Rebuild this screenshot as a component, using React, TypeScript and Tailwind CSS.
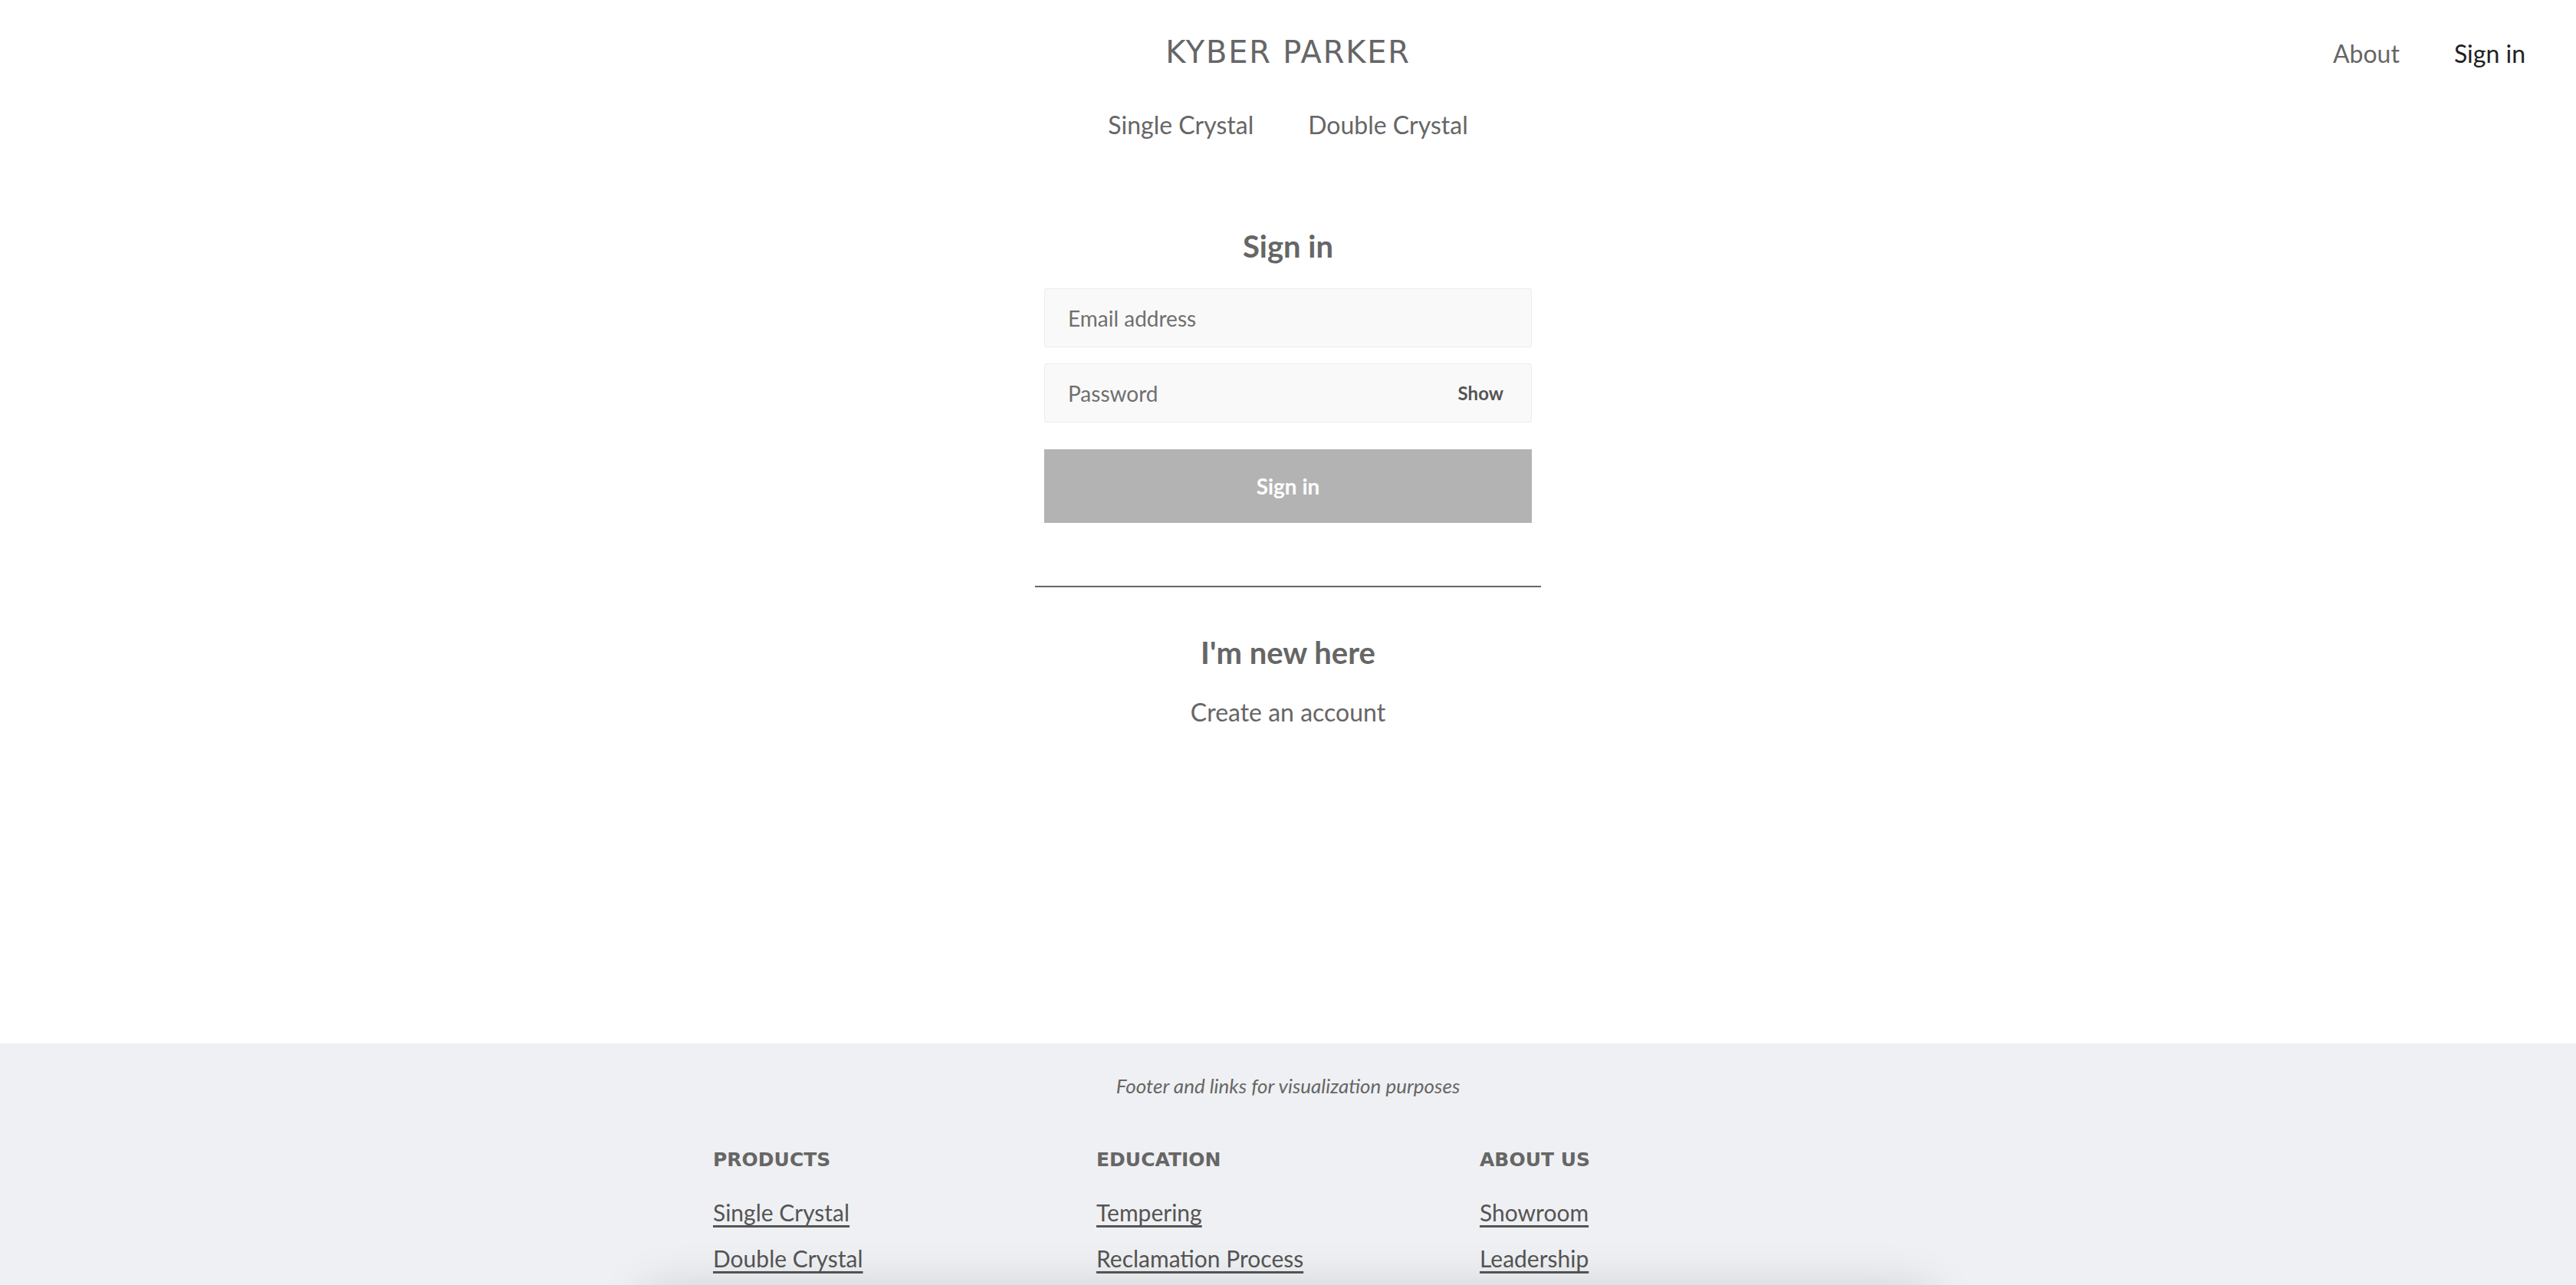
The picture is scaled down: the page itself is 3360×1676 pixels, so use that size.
import React from "react";

const footerColumns = [
  { title: "PRODUCTS", links: ["Single Crystal", "Double Crystal"] },
  { title: "EDUCATION", links: ["Tempering", "Reclamation Process"] },
  { title: "ABOUT US", links: ["Showroom", "Leadership"] },
];

export default function App() {
  return (
    <div className="relative min-h-screen bg-white font-[family-name:Lato,sans-serif] text-[#666]">
      <header className="grid grid-cols-[1fr_auto_1fr] items-baseline px-[66px] pt-[44px]">
        <div />
        <a
          href="#"
          className="font-[family-name:'DejaVu_Sans',sans-serif] text-[40px] leading-[48px] tracking-[1.75px] text-[#666]"
        >
          KYBER PARKER
        </a>
        <nav className="flex items-baseline justify-end gap-[71px] text-[32px] leading-[38px]">
          <a href="#" className="text-[#666]">
            About
          </a>
          <a href="#" className="text-[#222]">
            Sign in
          </a>
        </nav>
      </header>

      <nav className="mt-[52px] flex justify-center gap-[71px] text-[32px] leading-[38px]">
        <a href="#">Single Crystal</a>
        <a href="#">Double Crystal</a>
      </nav>

      <main className="mt-[115px] flex flex-col items-center pb-[413px]">
        <h1 className="text-[40px] font-bold leading-[48px]">Sign in</h1>
        <form className="mt-[31px] flex w-[636px] flex-col">
          <input
            type="email"
            placeholder="Email address"
            className="h-[77px] rounded-[3px] border border-[#ececec] bg-[#f9f9f9] px-[30px] text-[28px] placeholder:text-[#6f6f6f] focus:outline-none"
          />
          <div className="mt-[21px] flex h-[77px] items-center rounded-[3px] border border-[#ececec] bg-[#f9f9f9] pl-[30px] pr-[36px]">
            <input
              type="password"
              placeholder="Password"
              className="min-w-0 flex-1 bg-transparent text-[28px] placeholder:text-[#6f6f6f] focus:outline-none"
            />
            <button type="button" className="text-[24px] font-bold text-[#555]">
              Show
            </button>
          </div>
          <button
            type="submit"
            className="mt-[35px] h-[96px] bg-[#b3b3b3] text-[28px] font-bold text-white"
          >
            Sign in
          </button>
        </form>
        <hr className="mt-[82px] w-[660px] border-0 border-t-2 border-[#666]" />
        <h2 className="mt-[61px] text-[40px] font-bold leading-[48px]">I'm new here</h2>
        <a href="#" className="mt-[35px] text-[32px] leading-[38px]">
          Create an account
        </a>
      </main>

      <footer className="bg-[#eff0f3] pb-[80px] pt-[40px]">
        <p className="text-center text-[26px] italic leading-[31px]">
          Footer and links for visualization purposes
        </p>
        <div className="mx-auto mt-[66px] grid w-[1500px] grid-cols-3">
          {footerColumns.map((col) => (
            <div key={col.title} className="flex flex-col items-start">
              <h3 className="font-[family-name:'DejaVu_Sans',sans-serif] text-[25px] font-bold leading-[30px] text-[#666]">
                {col.title}
              </h3>
              <ul className="mt-[35px] flex flex-col gap-[24px]">
                {col.links.map((link) => (
                  <li key={link}>
                    <a
                      href="#"
                      className="text-[30px] leading-[36px] text-[#555] underline underline-offset-[5px]"
                    >
                      {link}
                    </a>
                  </li>
                ))}
              </ul>
            </div>
          ))}
        </div>
      </footer>

      <div className="pointer-events-none fixed left-1/2 top-full h-[80px] w-[1700px] -translate-x-1/2 rounded-full shadow-[0_0_60px_rgba(0,0,0,0.12)]" />
    </div>
  );
}
